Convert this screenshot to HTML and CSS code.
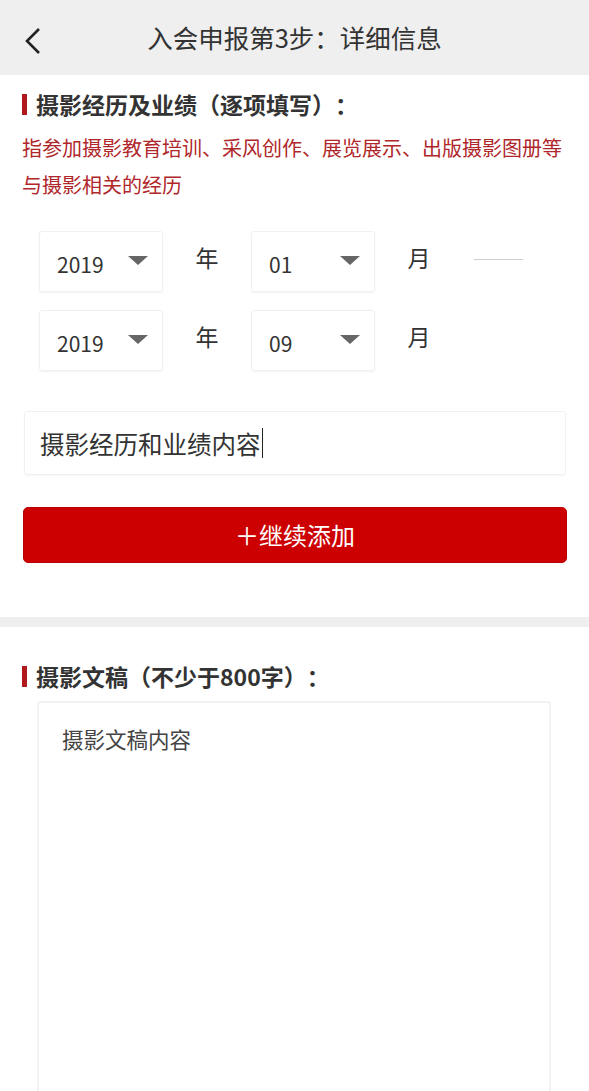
FILE: index.html
```html
<!DOCTYPE html>
<html lang="zh-CN">
<head>
<meta charset="utf-8">
<title>入会申报第3步：详细信息</title>
<link rel="stylesheet" href="styles.css">
</head>
<body>
<header class="topbar">
  <button class="back" aria-label="返回">
    <svg width="18" height="28" viewBox="0 0 18 28"><path d="M15 2 L3 14 L15 26" fill="none" stroke="#222" stroke-width="2.6" stroke-linejoin="miter"/></svg>
  </button>
  <h1 class="topbar-title">入会申报第3步：详细信息</h1>
</header>

<section class="panel panel-history">
  <h2 class="sec-title">摄影经历及业绩（逐项填写）：</h2>
  <p class="hint">指参加摄影教育培训、采风创作、展览展示、出版摄影图册等与摄影相关的经历</p>

  <div class="date-rows">
    <div class="date-row">
      <div class="select"><span class="select-value">2019</span><span class="caret-down"></span></div>
      <span class="unit">年</span>
      <div class="select"><span class="select-value">01</span><span class="caret-down"></span></div>
      <span class="unit">月</span>
      <span class="range-dash"></span>
    </div>
    <div class="date-row">
      <div class="select"><span class="select-value">2019</span><span class="caret-down"></span></div>
      <span class="unit">年</span>
      <div class="select"><span class="select-value">09</span><span class="caret-down"></span></div>
      <span class="unit">月</span>
    </div>
  </div>

  <div class="text-field">摄影经历和业绩内容<span class="text-cursor"></span></div>

  <button class="add-btn">＋继续添加</button>
</section>

<div class="divider"></div>

<section class="panel panel-essay">
  <h2 class="sec-title">摄影文稿（不少于800字）：</h2>
  <div class="essay-box">摄影文稿内容</div>
</section>
</body>
</html>
```

FILE: styles.css
```css
* {
  box-sizing: border-box;
}

html, body {
  margin: 0;
  padding: 0;
  background: #fff;
}

body {
  width: 589px;
  font-family: "Noto Sans CJK SC", "Noto Sans", sans-serif;
  color: #333;
  text-spacing-trim: space-all;
}

/* top navigation bar */
.topbar {
  height: 75px;
  background: #efefef;
  display: flex;
  align-items: center;
  justify-content: center;
  position: relative;
}

.back {
  position: absolute;
  left: 22px;
  top: 26px;
  width: 22px;
  height: 30px;
  padding: 0;
  border: 0;
  background: none;
  display: flex;
  align-items: center;
  justify-content: center;
}

.topbar-title {
  margin: 0;
  font-size: 25.5px;
  font-weight: 400;
  color: #333;
  line-height: 30px;
  margin-top: -2px;
}

/* content panels */
.panel {
  padding: 14px 23px 54px 22px;
}

.panel-essay {
  padding-top: 34px;
  padding-bottom: 0;
}

.sec-title {
  margin: 0;
  display: flex;
  align-items: center;
  gap: 9px;
  font-size: 23px;
  font-weight: 700;
  line-height: 30px;
  color: #333;
}

.sec-title::before {
  content: "";
  width: 5px;
  height: 21px;
  background: #b01a1d;
  flex: none;
}

.hint {
  margin: 10px 0 0;
  font-size: 20px;
  line-height: 37px;
  color: #b0272b;
}

/* start / end month pickers */
.date-rows {
  margin: 28px 0 0 17px;
  display: flex;
  flex-direction: column;
  gap: 18px;
}

.date-row {
  display: flex;
  align-items: center;
  height: 61px;
}

.select {
  width: 124px;
  height: 61px;
  border: 1px solid #f0f0f0;
  border-radius: 3px;
  box-shadow: 0 1px 2px rgba(0, 0, 0, 0.05);
  display: flex;
  align-items: center;
  justify-content: space-between;
  padding: 4px 14px 0 17px;
}

.select-value {
  font-size: 21px;
  color: #333;
  line-height: 28px;
}

.caret-down {
  width: 0;
  height: 0;
  border-left: 10px solid transparent;
  border-right: 10px solid transparent;
  border-top: 9px solid #666;
  margin-top: -7px;
}

.unit {
  width: 88px;
  text-align: center;
  font-size: 23px;
  line-height: 30px;
  color: #333;
  margin-top: -10px;
}

.range-dash {
  width: 49px;
  height: 1px;
  background: #cfcfcf;
  margin: -4px 0 0 11px;
}

/* free-text entry */
.text-field {
  margin: 40px 0 0 2px;
  height: 64px;
  border: 1px solid #f0f0f0;
  border-radius: 3px;
  box-shadow: 0 1px 2px rgba(0, 0, 0, 0.04);
  display: flex;
  align-items: center;
  padding: 0 0 0 15px;
  font-size: 24.5px;
  color: #333;
}

.text-cursor {
  width: 1.5px;
  height: 30px;
  background: #222;
  margin-left: 1px;
}

.add-btn {
  display: block;
  width: 100%;
  margin-top: 32px;
  margin-left: 1px;
  height: 56px;
  border: 1px solid #b80000;
  border-radius: 5px;
  background: #cc0000;
  color: #fff;
  font-family: inherit;
  font-size: 24px;
  line-height: 30px;
  padding: 0;
}

.divider {
  height: 10px;
  background: #efefef;
}

/* essay area */
.essay-box {
  margin: 10px 15px 0 15px;
  height: 400px;
  border: 2px solid #f2f2f2;
  border-bottom: 0;
  border-radius: 3px 3px 0 0;
  padding: 21px 0 0 23px;
  font-size: 21.5px;
  line-height: 30px;
  color: #444;
}
```
